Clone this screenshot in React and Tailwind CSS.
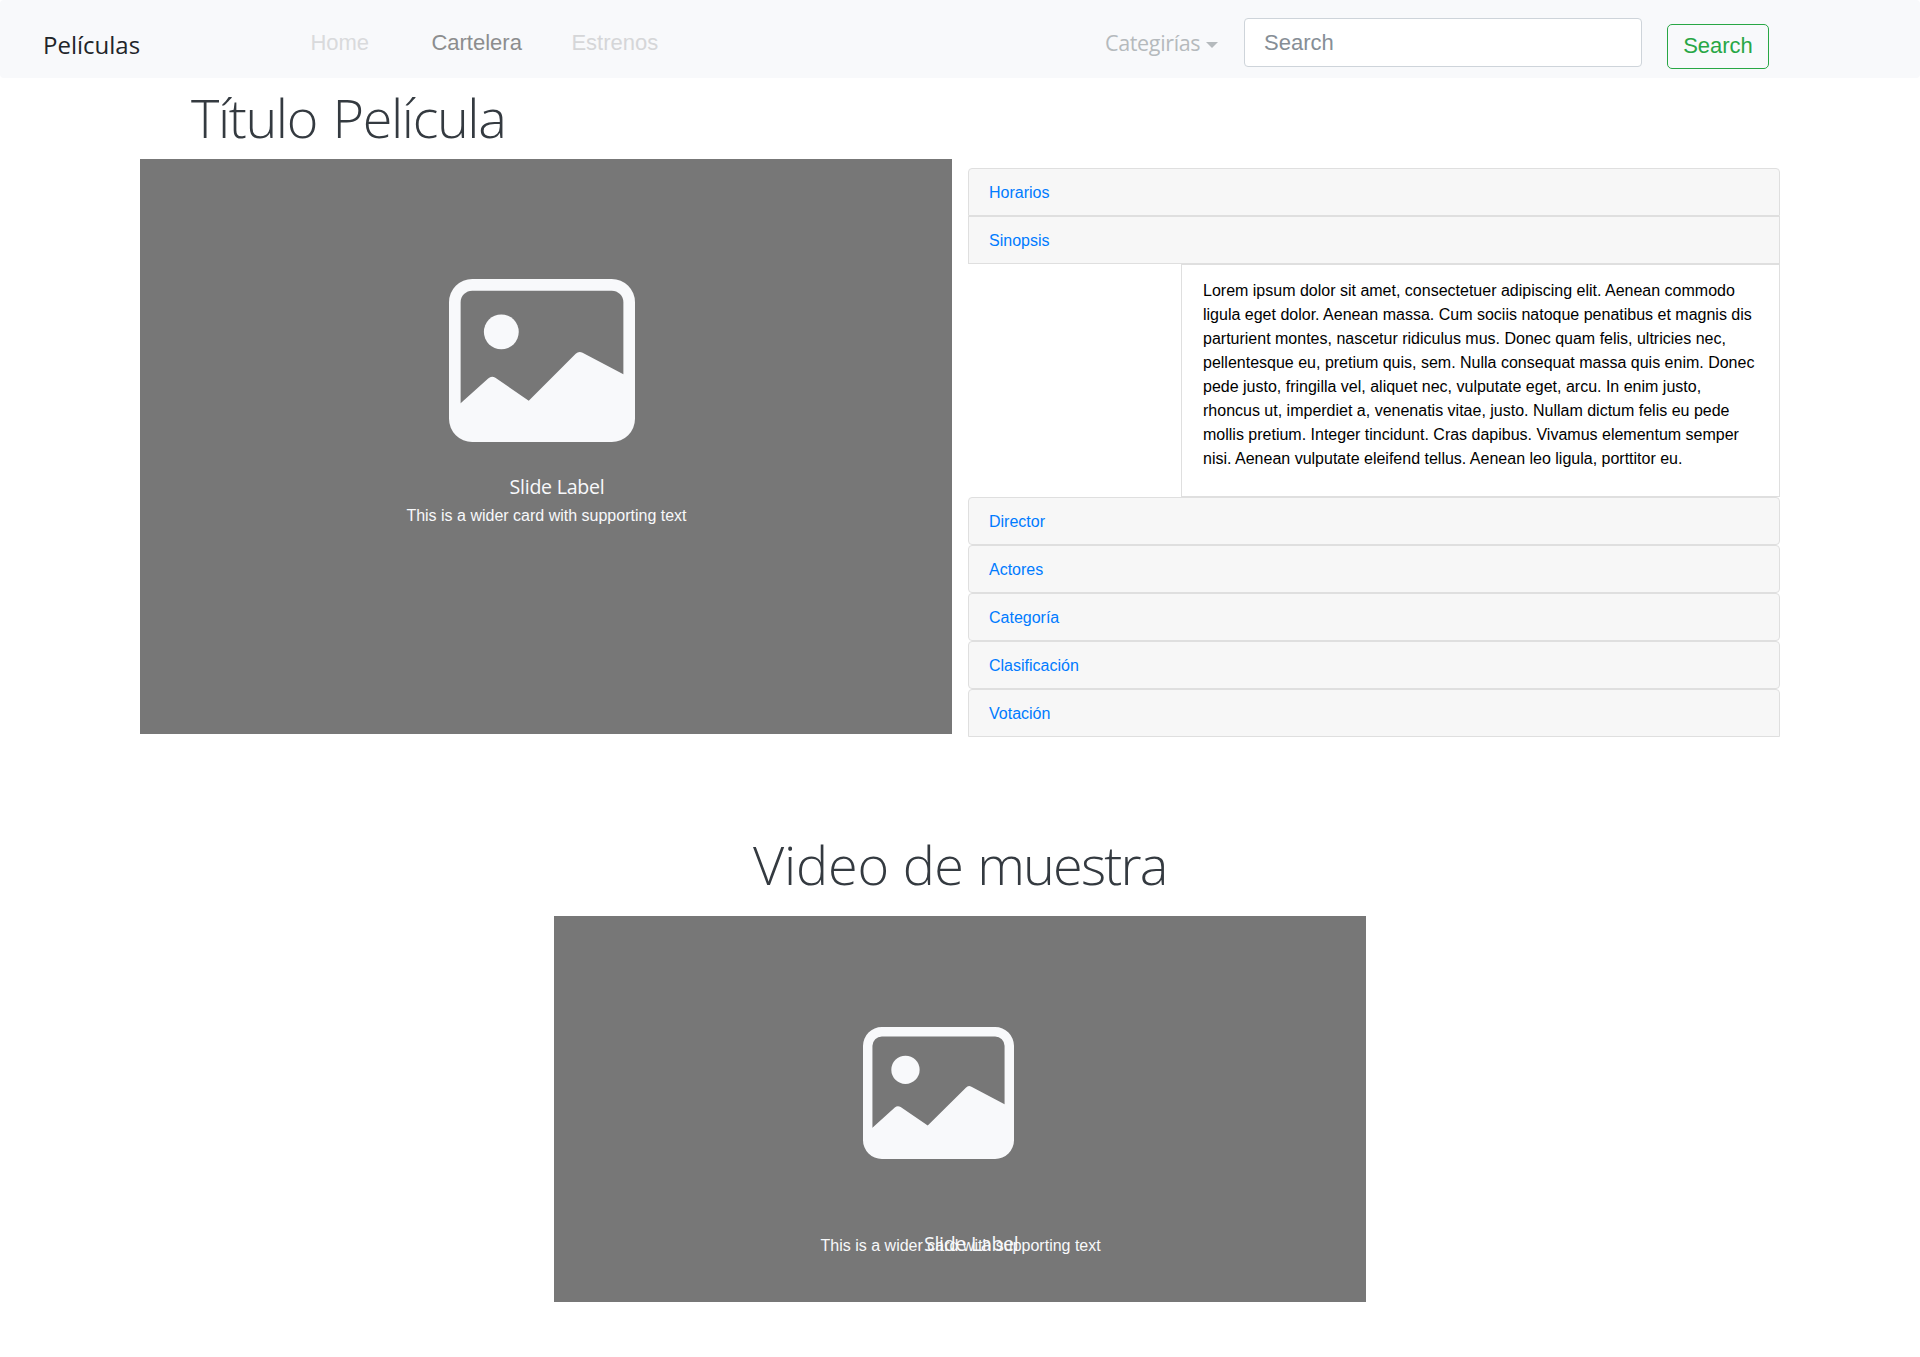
import React from "react";

const PictureIcon = ({ className }) => (
  <svg className={className} viewBox="0 1 16 14" preserveAspectRatio="none" fill="currentColor" aria-hidden="true">
    <path fillRule="evenodd" d="M14 2H2a1 1 0 0 0-1 1v10a1 1 0 0 0 1 1h12a1 1 0 0 0 1-1V3a1 1 0 0 0-1-1zM2 1a2 2 0 0 0-2 2v10a2 2 0 0 0 2 2h12a2 2 0 0 0 2-2V3a2 2 0 0 0-2-2H2z" />
    <path d="M10.9 7.43a.5.5 0 0 1 .59-.09L15 9.18h.5V14.2H.5v-2.52H1l2.37-2.13a.5.5 0 0 1 .62-.06l2.87 1.96z" />
    <circle cx="4.5" cy="5.54" r="1.5" />
  </svg>
);

const synopsis = [
  "Lorem ipsum dolor sit amet, consectetuer adipiscing elit. Aenean commodo",
  "ligula eget dolor. Aenean massa. Cum sociis natoque penatibus et magnis dis",
  "parturient montes, nascetur ridiculus mus. Donec quam felis, ultricies nec,",
  "pellentesque eu, pretium quis, sem. Nulla consequat massa quis enim. Donec",
  "pede justo, fringilla vel, aliquet nec, vulputate eget, arcu. In enim justo,",
  "rhoncus ut, imperdiet a, venenatis vitae, justo. Nullam dictum felis eu pede",
  "mollis pretium. Integer tincidunt. Cras dapibus. Vivamus elementum semper",
  "nisi. Aenean vulputate eleifend tellus. Aenean leo ligula, porttitor eu.",
];

const AccordionItem = ({ title, className = "" }) => (
  <div className={`h-12 border border-[#dfdfdf] bg-[#f7f7f7] pl-5 pt-3 leading-6 text-[#007bff] ${className}`}>
    <a href="#">{title}</a>
  </div>
);

const Navbar = () => (
  <nav className="flex h-[78px] items-start rounded bg-[#f8f9fb] pl-[43px] text-[22px] leading-[33px]">
    <a className="mt-[27px] w-[267.4px] font-['Open_Sans',sans-serif] text-2xl leading-9 text-[#212529]">Películas</a>
    <a className="mt-[26px] w-[121px] text-[#d9dadc]">Home</a>
    <a className="mt-[26px] w-[140px] text-[#8c8d8e]">Cartelera</a>
    <a className="mt-[26px] w-[533.6px] text-[#d5d6d8]">Estrenos</a>
    <a className="mt-[26px] flex w-[139px] items-center font-['Open_Sans',sans-serif] text-[21.5px] tracking-[-0.35px] text-[#b5babd]">
      Categirías
      <svg className="ml-[6px] mt-[5px] h-[6px] w-3" viewBox="0 0 12 6" fill="currentColor" aria-hidden="true">
        <path d="M0 0h12L6 6z" />
      </svg>
    </a>
    <div className="mt-[18px] h-[49px] w-[398px] rounded-[4px] border border-[#ced4da] bg-white pl-[19px] pt-[7px] text-[#868e96]">Search</div>
    <button className="ml-[25px] mt-6 h-[45px] w-[102px] rounded-[5px] border border-[#28a745] pb-[2px] text-[#28a745]">Search</button>
  </nav>
);

export default function App() {
  return (
    <div className="h-[1357px] w-[1920px] overflow-hidden bg-white font-['Liberation_Sans',Arial,sans-serif] text-base">
      <Navbar />
      <h1 className="ml-[191px] mt-[7px] h-[74px] font-['Open_Sans',sans-serif] text-[54px] font-light leading-[65px] tracking-[-1.4px] text-[#343a40] [word-spacing:3px]">
        Título Película
      </h1>

      <main className="ml-[140px] flex items-start gap-4">
        <section className="h-[575px] w-[812px] bg-[#777777] pt-[120.4px] text-[#f8f9fb]">
          <PictureIcon className="ml-[309px] h-[163px] w-[186px]" />
          <h5 className="ml-[369.5px] mt-[32.6px] font-['Open_Sans',sans-serif] text-[19.6px] leading-6 tracking-[-0.25px]">Slide Label</h5>
          <p className="ml-[266.4px] mt-[5px] leading-6">This is a wider card with supporting text</p>
        </section>

        <section className="mt-[9px] w-[812px]">
          <AccordionItem title="Horarios" className="rounded-t-[4px]" />
          <AccordionItem title="Sinopsis" />
          <div className="ml-[213px] h-[233px] border border-[#dfdfdf] bg-white pl-[21px] pt-[14px] leading-6 text-black">
            {synopsis.map((line) => (
              <p key={line} className="whitespace-nowrap">{line}</p>
            ))}
          </div>
          <AccordionItem title="Director" className="rounded-[4px]" />
          <AccordionItem title="Actores" className="rounded-[4px]" />
          <AccordionItem title="Categoría" className="rounded-[4px]" />
          <AccordionItem title="Clasificación" className="rounded-[4px]" />
          <AccordionItem title="Votación" className="rounded-t-[4px]" />
        </section>
      </main>

      <h1 className="ml-[753px] mt-[95px] h-[84px] font-['Open_Sans',sans-serif] text-[54px] font-light leading-[65px] tracking-[-0.2px] text-[#343a40]">
        Video <span className="tracking-[-0.6px]">de</span> <span className="tracking-[-1.8px]">muestra</span>
      </h1>

      <section className="ml-[554px] h-[386px] w-[812px] bg-[#777777] pt-[111.4px] text-[#f8f9fb]">
        <PictureIcon className="ml-[309px] h-[132px] w-[151px]" />
        <div className="relative mt-[74.6px] h-6">
          <p className="ml-[266.6px] leading-6">This is a wider card with supporting text</p>
          <h5 className="absolute left-[370px] top-[-2px] font-['Open_Sans',sans-serif] text-[19.6px] leading-6 tracking-[-0.3px]">Slide Label</h5>
        </div>
      </section>
    </div>
  );
}
